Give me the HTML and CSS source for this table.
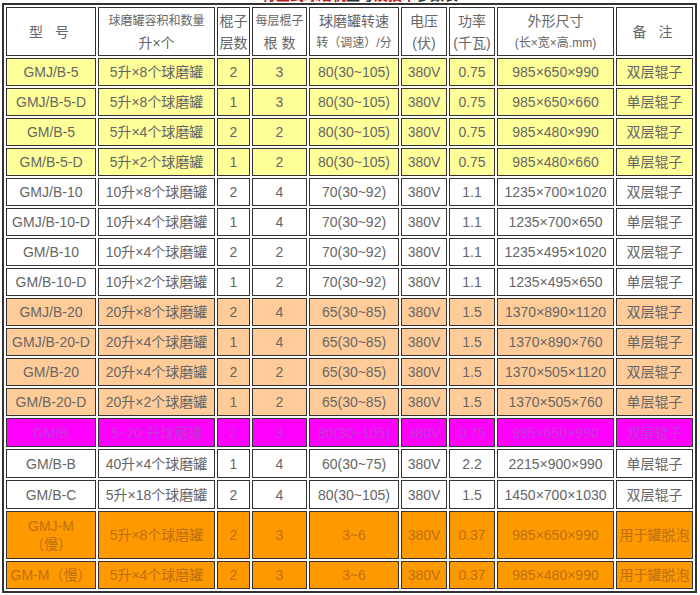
FILE: index.html
```html
<!DOCTYPE html>
<html lang="zh">
<head>
<meta charset="utf-8">
<title>球磨机技术参数</title>
<link rel="stylesheet" href="styles.css">
</head>
<body>
<div class="title"><div class="title-inner"><span class="red">行星式球磨机</span><span class="dark">型号</span><span class="red">及技术</span><span class="dark">参数表</span></div></div>
<table class="spec">
  <colgroup>
    <col class="c1"><col class="c2"><col class="c3"><col class="c4"><col class="c5"><col class="c6"><col class="c7"><col class="c8"><col class="c9">
  </colgroup>
  <tr class="head">
    <td><span class="wide">型 号</span></td>
    <td><div class="l1 sm">球磨罐容积和数量</div><div class="l2">升×个</div></td>
    <td><div class="l1">棍子</div><div class="l2">层数</div></td>
    <td><div class="l1 sm">每层棍子</div><div class="l2">根 数</div></td>
    <td><div class="l1">球磨罐转速</div><div class="l2 sm">转（调速）/分</div></td>
    <td><div class="l1">电压</div><div class="l2">(伏)</div></td>
    <td><div class="l1">功率</div><div class="l2">(千瓦)</div></td>
    <td><div class="l1">外形尺寸</div><div class="l2 sm">(长×宽×高.mm)</div></td>
    <td><span class="wide">备 注</span></td>
  </tr>
  <tr class="yellow"><td>GMJ/B-5</td><td>5升×8个球磨罐</td><td>2</td><td>3</td><td>80(30~105)</td><td>380V</td><td>0.75</td><td>985×650×990</td><td>双层辊子</td></tr>
  <tr class="yellow"><td>GMJ/B-5-D</td><td>5升×8个球磨罐</td><td>1</td><td>3</td><td>80(30~105)</td><td>380V</td><td>0.75</td><td>985×650×660</td><td>单层辊子</td></tr>
  <tr class="yellow"><td>GM/B-5</td><td>5升×4个球磨罐</td><td>2</td><td>2</td><td>80(30~105)</td><td>380V</td><td>0.75</td><td>985×480×990</td><td>双层辊子</td></tr>
  <tr class="yellow"><td>GM/B-5-D</td><td>5升×2个球磨罐</td><td>1</td><td>2</td><td>80(30~105)</td><td>380V</td><td>0.75</td><td>985×480×660</td><td>单层辊子</td></tr>
  <tr class="white"><td>GMJ/B-10</td><td>10升×8个球磨罐</td><td>2</td><td>4</td><td>70(30~92)</td><td>380V</td><td>1.1</td><td>1235×700×1020</td><td>双层辊子</td></tr>
  <tr class="white"><td>GMJ/B-10-D</td><td>10升×4个球磨罐</td><td>1</td><td>4</td><td>70(30~92)</td><td>380V</td><td>1.1</td><td>1235×700×650</td><td>单层辊子</td></tr>
  <tr class="white"><td>GM/B-10</td><td>10升×4个球磨罐</td><td>2</td><td>2</td><td>70(30~92)</td><td>380V</td><td>1.1</td><td>1235×495×1020</td><td>双层辊子</td></tr>
  <tr class="white"><td>GM/B-10-D</td><td>10升×2个球磨罐</td><td>1</td><td>2</td><td>70(30~92)</td><td>380V</td><td>1.1</td><td>1235×495×650</td><td>单层辊子</td></tr>
  <tr class="peach"><td>GMJ/B-20</td><td>20升×8个球磨罐</td><td>2</td><td>4</td><td>65(30~85)</td><td>380V</td><td>1.5</td><td>1370×890×1120</td><td>双层辊子</td></tr>
  <tr class="peach"><td>GMJ/B-20-D</td><td>20升×4个球磨罐</td><td>1</td><td>4</td><td>65(30~85)</td><td>380V</td><td>1.5</td><td>1370×890×760</td><td>单层辊子</td></tr>
  <tr class="peach"><td>GM/B-20</td><td>20升×4个球磨罐</td><td>2</td><td>2</td><td>65(30~85)</td><td>380V</td><td>1.5</td><td>1370×505×1120</td><td>双层辊子</td></tr>
  <tr class="peach"><td>GM/B-20-D</td><td>20升×2个球磨罐</td><td>1</td><td>2</td><td>65(30~85)</td><td>380V</td><td>1.5</td><td>1370×505×760</td><td>单层辊子</td></tr>
  <tr class="magenta tall"><td>GM/B</td><td>5~20 升球磨罐</td><td>2</td><td>3</td><td>80(30~105)</td><td>380V</td><td>0.75</td><td>985×650×990</td><td>双层辊子</td></tr>
  <tr class="white tall"><td>GM/B-B</td><td>40升×4个球磨罐</td><td>1</td><td>4</td><td>60(30~75)</td><td>380V</td><td>2.2</td><td>2215×900×990</td><td>单层辊子</td></tr>
  <tr class="white tall"><td>GM/B-C</td><td>5升×18个球磨罐</td><td>2</td><td>4</td><td>80(30~105)</td><td>380V</td><td>1.5</td><td>1450×700×1030</td><td>双层辊子</td></tr>
  <tr class="orange double"><td><div class="ln">GMJ-M</div><div class="ln">（慢）</div></td><td>5升×8个球磨罐</td><td>2</td><td>3</td><td>3~6</td><td>380V</td><td>0.37</td><td>985×650×990</td><td>用于罐脱泡</td></tr>
  <tr class="orange"><td>GM-M（慢）</td><td>5升×4个球磨罐</td><td>2</td><td>3</td><td>3~6</td><td>380V</td><td>0.37</td><td>985×480×990</td><td>用于罐脱泡</td></tr>
</table>
</body>
</html>
```
FILE: styles.css
```css
body {
  margin: 0;
  background: #ffffff;
  font-family: "Liberation Sans", "Noto Sans CJK SC", sans-serif;
  color: #666666;
}

.title {
  height: 3px;
  overflow: hidden;
  text-align: center;
  padding-left: 20px;
}

.title-inner {
  margin-top: -12px;
  font-size: 14px;
  line-height: 15px;
  font-weight: bold;
}

.red { color: #b81c1c; }
.dark { color: #333333; }

.spec {
  margin-left: 2px;
  border: 2px solid #333333;
  border-spacing: 2px;
  table-layout: fixed;
  width: 695px;
}

.c1 { width: 90px; }
.c2 { width: 117px; }
.c3 { width: 33px; }
.c4 { width: 55px; }
.c5 { width: 90px; }
.c6 { width: 46px; }
.c7 { width: 46px; }
.c8 { width: 117px; }
.c9 { width: 77px; }

.spec td {
  border: 1px solid #333333;
  padding: 0;
  text-align: center;
  vertical-align: middle;
  font-size: 14px;
  line-height: 16px;
  white-space: nowrap;
  overflow: hidden;
}

.spec tr { height: 28px; }
.spec tr.tall { height: 29px; }
.spec tr.double { height: 48px; }
.spec tr.head { height: 49px; }

.head td { background: #ffffff; }
.head .l1, .head .l2 { line-height: 22px; }
.head .sm { font-size: 12px; }
.wide { letter-spacing: 4px; }

.ln { line-height: 18px; }

.yellow td { background: #ffff99; }
.white td { background: #ffffff; }
.peach td { background: #ffcc99; }
.magenta td { background: #ff00ff; color: #c03cd4; }
.orange td { background: #ff9900; color: #bd7013; }
```
